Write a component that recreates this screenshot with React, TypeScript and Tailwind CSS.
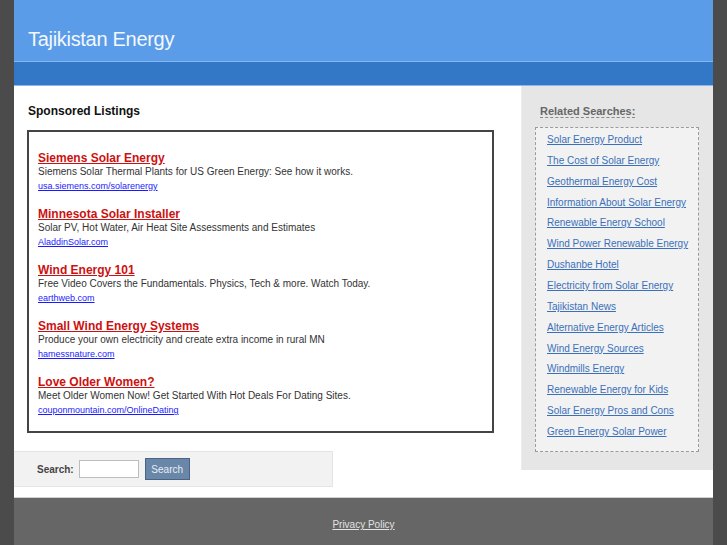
const ads = [
	{title: 'Siemens Solar Energy', desc: 'Siemens Solar Thermal Plants for US Green Energy: See how it works.', url: 'usa.siemens.com/solarenergy'},
	{title: 'Minnesota Solar Installer', desc: 'Solar PV, Hot Water, Air Heat Site Assessments and Estimates', url: 'AladdinSolar.com'},
	{title: 'Wind Energy 101', desc: 'Free Video Covers the Fundamentals. Physics, Tech & more. Watch Today.', url: 'earthweb.com'},
	{title: 'Small Wind Energy Systems', desc: 'Produce your own electricity and create extra income in rural MN', url: 'hamessnature.com'},
	{title: 'Love Older Women?', desc: 'Meet Older Women Now! Get Started With Hot Deals For Dating Sites.', url: 'couponmountain.com/OnlineDating'},
];

const related = [
	'Solar Energy Product',
	'The Cost of Solar Energy',
	'Geothermal Energy Cost',
	'Information About Solar Energy',
	'Renewable Energy School',
	'Wind Power Renewable Energy',
	'Dushanbe Hotel',
	'Electricity from Solar Energy',
	'Tajikistan News',
	'Alternative Energy Articles',
	'Wind Energy Sources',
	'Windmills Energy',
	'Renewable Energy for Kids',
	'Solar Energy Pros and Cons',
	'Green Energy Solar Power',
];

const App = () => {
	return (
		<div className="min-h-[545px] bg-[#4b4b4b] font-['Liberation_Sans',Arial,sans-serif]">
			<div className="mx-auto w-[699px] bg-white">
				{/* header */}
				<div className="h-[62px] bg-[#5b9ce9] border-b border-[#86b6ee] pl-[14px] pt-[27px]">
					<h1 className="text-[20px] leading-[24px] text-[#f4f8fd] tracking-[-0.3px]">Tajikistan Energy</h1>
				</div>
				<div className="h-[24px] bg-[#3377c7] border-b border-[#8db7e9]" />

				{/* main */}
				<div className="flex items-start">
					<div className="w-[507px]">
						<h2 className="pl-[14px] pt-[18px] text-[12px] leading-[14px] font-bold text-[#111]">Sponsored Listings</h2>
						<div className="ml-[13px] mt-[12px] w-[467px] border-2 border-[#444] pl-[9px] pt-[19px] pb-[14px] flex flex-col gap-[14px]">
							{ads.map((ad) => (
								<div key={ad.title} className="flex flex-col">
									<a href="#" className="text-[12px] leading-[14px] font-bold text-[#cc1111] underline self-start">{ad.title}</a>
									<span className="text-[10px] leading-[14px] text-[#333]">{ad.desc}</span>
									<a href="#" className="text-[9px] leading-[14px] text-[#1a1aff] underline self-start">{ad.url}</a>
								</div>
							))}
						</div>
						<div className="mt-[18px] w-[319px] h-[36px] bg-[#f2f2f2] border border-l-0 border-[#e4e4e4] flex items-center pl-[23px]">
							<span className="text-[10px] font-bold text-[#444]">Search:</span>
							<input className="ml-[5px] w-[60px] h-[18px] bg-white border border-[#bdbdbd]" />
							<button className="ml-[6px] w-[45px] h-[22px] bg-[#6987a8] border border-[#4b6282] text-[10px] text-[#e9eef5]">Search</button>
						</div>
					</div>

					<div className="w-[192px] h-[384px] bg-[#e6e6e6] border-l border-[#ececec] pl-[13px] pr-[14px] pt-[17px]">
						<div className="pl-[5px] leading-[14px] h-[14px]">
							<span className="text-[11px] leading-[14px] font-bold text-[#666] border-b border-dashed border-[#888]">Related Searches:</span>
						</div>
						<div className="mt-[10px] h-[325px] bg-[#f2f2f2] border border-dashed border-[#9a9a9a] pl-[11px] pt-[5px] flex flex-col gap-[6.86px]">
							{related.map((r) => (
								<a key={r} href="#" className="text-[10px] leading-[14px] text-[#3a70b9] underline self-start">{r}</a>
							))}
						</div>
					</div>
				</div>

				<div className="h-[10px]" />
				{/* footer */}
				<div className="bg-[#666] border-t border-[#d0d0d0] h-[49px] flex justify-center pt-[20px]">
					<a href="#" className="text-[10px] leading-[14px] text-[#e2e2e2] underline">Privacy Policy</a>
				</div>
			</div>
		</div>
	);
};

export default App;
